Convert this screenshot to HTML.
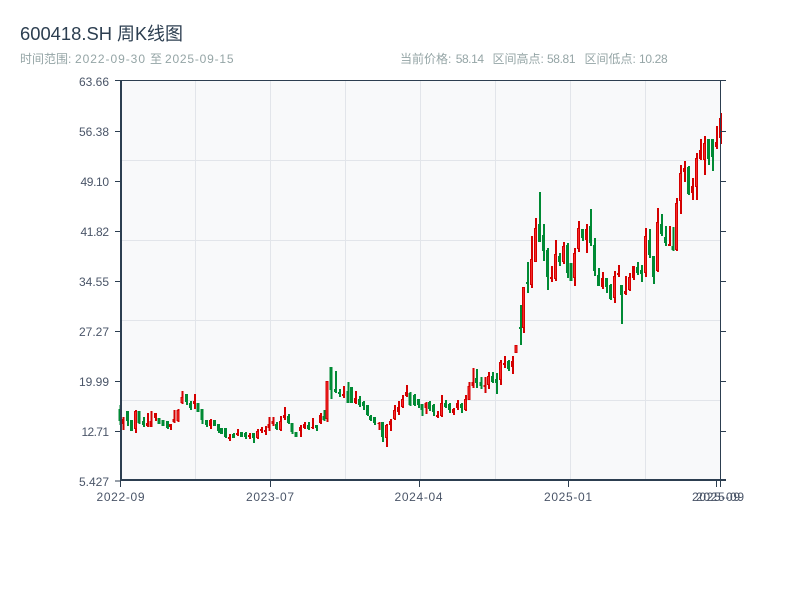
<!DOCTYPE html>
<html><head><meta charset="utf-8">
<style>
html,body{margin:0;padding:0;background:#fff;width:800px;height:600px;overflow:hidden}
svg{display:block}
text{font-family:"Liberation Sans","WenQuanYi Zen Hei","Noto Sans CJK SC",sans-serif}
.w{shape-rendering:crispEdges}
</style></head><body>
<svg width="800" height="600" viewBox="0 0 800 600" xmlns="http://www.w3.org/2000/svg">
<text x="20" y="40" font-size="18" fill="#2c3e50" textLength="92" lengthAdjust="spacingAndGlyphs">600418.SH</text>
<text x="117" y="40" font-size="18" fill="#2c3e50">周K线图</text>
<g font-size="12" fill="#95a5a6">
<text x="20" y="63">时间范围:</text>
<text x="75" y="63" textLength="70">2022-09-30</text>
<text x="150" y="63">至</text>
<text x="165" y="63" textLength="68.5">2025-09-15</text>
<text x="400" y="63">当前价格:</text>
<text x="455.7" y="63" textLength="28.3">58.14</text>
<text x="492.5" y="63">区间高点:</text>
<text x="547" y="63" textLength="28.5">58.81</text>
<text x="584.5" y="63">区间低点:</text>
<text x="639" y="63" textLength="28.7">10.28</text>
</g>
<rect x="121" y="81" width="600" height="400" fill="#f8f9fa"/>
<path d="M195.5 81V481M270.5 81V481M345.5 81V481M420.5 81V481M495.5 81V481M570.5 81V481M645.5 81V481M121 160.5H720M121 240.5H720M121 320.5H720M121 400.5H720" stroke="#e2e5ea" stroke-width="1" fill="none"/>
<path class="w" transform="translate(.3 0)" fill="none" stroke="#008a34" stroke-width="2" d="M120 405V425M127.7 411V426M131.7 420V431M139.3 411V424M143.7 417V427M159.3 418V424M163.3 420V426M167.7 421V429M186.7 394V405M190.7 401V410M198.3 403V412M202.3 409V424M206.7 420V427M214.7 420V426M218.7 424V433M221.7 428V434M225.7 428V438M233.7 433V438M241.7 432V437M245.7 432V439M253.7 433V443M276.7 422V430M288.7 414V424M292.3 423V434M296.3 432V437M308.7 422V430M316.7 425V431M324 410V421M331.3 367V399M335.7 371V393M339.7 389V397M348 382V403M351.7 387V403M359.7 396V407M363.7 401V410M367.7 405V416M370.7 415V421M374.7 417V425M382.7 422V442M410.3 392V406M414.7 394V406M418.7 399V408M422 404V416M429.7 401V411M433.7 404V416M445.7 400V408M449.7 403V413M461.7 403V413M476.7 369V388M481 377V389M492.7 372V383M496.7 373V394M508.7 360V371M520.7 305V345M527.7 262V293M539.7 192V242M543.7 224V261M547.7 248V290M559.7 253V266M567.7 243V278M571 263V281M582.7 229V241M590.7 209V246M594.7 238V276M598.7 268V286M606.7 278V293M610.7 284V300M621.7 285V324M637.7 262V275M641.7 265V282M649.7 229V258M653.7 256V284M661.7 214V236M665.7 226V246M673 227V251M688.7 166V195M708.7 139V165M712.7 139V171"/>
<path class="w" transform="translate(-.2 0)" fill="none" stroke="#008a34" stroke-width="3" d="M120 409V421M127.7 411V421M131.7 420V431M139.3 411V423M143.7 421V425M159.3 418V424M163.3 420V426M167.7 421V428M186.7 394V402M190.7 403V408M198.3 403V412M202.3 409V420M206.7 420V425M214.7 420V426M218.7 424V431M221.7 428V434M225.7 428V437M233.7 434V438M241.7 432V437M245.7 433V437M253.7 433V438M276.7 424V429M288.7 416V423M292.3 423V432M296.3 432V437M308.7 425V429M316.7 425V428M324 416V420M331.3 367V390M335.7 389V392M339.7 392V394M348 391V403M351.7 387V403M359.7 399V405M363.7 402V406M367.7 405V415M370.7 416V420M374.7 417V423M382.7 422V437M410.3 393V405M414.7 395V405M418.7 399V405M422 404V410M429.7 402V409M433.7 405V412M445.7 403V407M449.7 404V410M461.7 404V408M476.7 378V383M481 382V386M492.7 376V382M496.7 379V383M508.7 361V369M520.7 327V329M527.7 282V284M539.7 224V242M543.7 235V251M547.7 250V277M559.7 256V262M567.7 245V273M571 263V281M582.7 229V238M590.7 226V243M594.7 245V271M598.7 275V286M606.7 278V287M610.7 285V299M621.7 285V295M637.7 267V273M641.7 270V274M649.7 240V255M653.7 256V277M661.7 224V234M665.7 237V243M673 246V250M688.7 167V194M708.7 139V159M712.7 139V157"/>
<path class="w" transform="translate(.3 0)" fill="none" stroke="#d40000" stroke-width="2" d="M123.3 417V430M135.7 410V433M147.7 413V427M151.3 411V427M155.7 413V421M170.7 424V430M174.3 410V423M178.3 409V422M182.3 391V404M194.7 394V409M210.7 419V429M229.7 434V441M237.7 429V436M249.7 433V439M257.7 429V439M261.7 427V433M265.7 426V435M269.3 417V431M273 417V426M280.7 416V431M284.7 407V420M300.7 425V437M304.7 422V429M312.7 418V429M320.7 413V424M327.3 381V422M343.7 386V398M355.7 391V404M379 422V430M386.7 424V447M390.7 419V431M394.7 405V420M398.7 401V415M402.7 395V408M406.7 385V397M426 402V414M437.7 411V418M441.7 395V417M453.7 408V415M457.7 400V410M465.7 395V411M469.3 382V400M473 368V388M485 377V393M488.7 372V389M500.7 360V385M504.7 356V368M512.7 356V374M516.3 345V353M523.7 287V333M531.7 236V288M535.7 218V262M551.7 266V282M555.7 240V281M563.7 242V264M574.7 248V286M578.7 221V252M586.7 224V253M602.7 272V289M614.7 271V303M618.7 265V277M625.7 276V295M629.7 273V291M633.7 266V280M645.7 228V277M657.7 208V272M669.7 226V246M676.7 198V251M680.7 165V214M684.7 161V182M692.7 178V200M696.7 153V200M700.7 139V160M704.7 136V175M716.7 126V149M720.7 113V144"/>
<path class="w" transform="translate(-.2 0)" fill="none" stroke="#d40000" stroke-width="3" d="M123.3 419V424M135.7 411V429M147.7 423V426M151.3 421V427M155.7 413V418M170.7 424V427M174.3 419V422M178.3 410V421M182.3 397V403M194.7 401V404M210.7 420V426M229.7 437V439M237.7 433V435M249.7 435V437M257.7 431V438M261.7 429V431M265.7 430V432M269.3 424V428M273 421V424M280.7 421V430M284.7 415V418M300.7 427V431M304.7 424V428M312.7 427V428M320.7 415V423M327.3 381V419M343.7 394V396M355.7 398V403M379 423V424M386.7 425V438M390.7 421V425M394.7 410V419M398.7 407V412M402.7 399V407M406.7 392V396M426 403V408M437.7 415V417M441.7 403V416M453.7 409V413M457.7 403V408M465.7 399V410M469.3 386V400M473 382V386M485 385V387M488.7 376V385M500.7 362V380M504.7 363V365M512.7 361V367M516.3 345V353M523.7 287V328M531.7 259V285M535.7 228V262M551.7 277V279M555.7 254V279M563.7 246V262M574.7 253V278M578.7 228V249M586.7 229V240M602.7 278V287M614.7 276V298M618.7 273V275M625.7 291V294M629.7 277V290M633.7 266V278M645.7 236V273M657.7 222V271M669.7 244V246M676.7 203V250M680.7 173V201M684.7 168V172M692.7 186V193M696.7 158V187M700.7 150V159M704.7 143V160M716.7 142V147M720.7 118V138"/>
<path class="w" transform="translate(-.2 0)" fill="none" stroke="#f52a2a" stroke-width="1" d="M135.7 412V428M178.3 411V420M182.3 398V402M257.7 432V437M280.7 422V429M327.3 382V418M386.7 426V437M394.7 411V418M402.7 400V406M441.7 404V415M465.7 400V409M469.3 387V399M488.7 377V384M500.7 363V379M516.3 346V352M523.7 288V327M531.7 260V284M535.7 229V261M555.7 255V278M563.7 247V261M574.7 254V277M578.7 229V248M614.7 277V297M629.7 278V289M645.7 237V272M657.7 223V270M676.7 204V249M680.7 174V200M696.7 159V186M704.7 144V159"/>
<path fill="none" stroke="#2c3e50" stroke-width="2" d="M121 81V480M120 480H726"/>
<path fill="none" stroke="#2c3e50" stroke-width="1" d="M115 80.5H726M720.5 80V480M115 131.5H121M115 181.5H121M115 231.5H121M115 281.5H121M115 331.5H121M115 381.5H121M115 431.5H121M115 481H121M720 131.5H726M720 181.5H726M720 231.5H726M720 281.5H726M720 331.5H726M720 381.5H726M720 431.5H726M120.5 481V487M270.5 481V487M419.5 481V487M568.5 481V487M716.5 481V487M720.5 481V487"/>
<g font-size="12" fill="#4a5568" text-anchor="end">
<text x="109" y="86">63.66</text>
<text x="109" y="136">56.38</text>
<text x="109" y="186" textLength="28.5">49.10</text>
<text x="109" y="236" textLength="28.5">41.82</text>
<text x="109" y="286">34.55</text>
<text x="109" y="336">27.27</text>
<text x="109" y="386">19.99</text>
<text x="109" y="436" textLength="27.5">12.71</text>
<text x="109" y="486">5.427</text>
</g>
<g font-size="12" fill="#4a5568" text-anchor="middle">
<text x="120.5" y="501" textLength="48">2022-09</text>
<text x="270" y="501" textLength="48">2023-07</text>
<text x="418.5" y="501" textLength="48">2024-04</text>
<text x="568" y="501" textLength="48">2025-01</text>
<text x="716" y="501" textLength="48">2025-09</text>
<text x="720" y="501" textLength="48">2025-09</text>
</g>
</svg>
</body></html>
